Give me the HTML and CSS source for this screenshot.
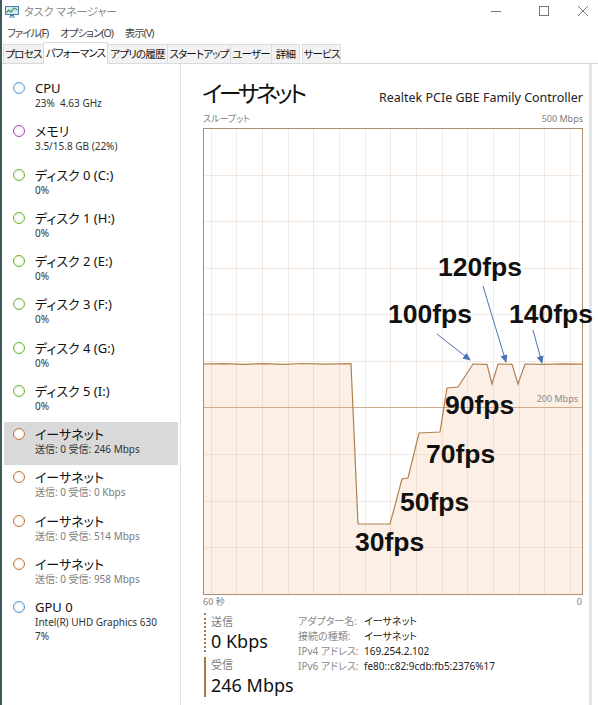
FILE: index.html
```html
<!DOCTYPE html>
<html lang="ja">
<head>
  <meta charset="UTF-8" />
  <title>タスク マネージャー</title>
  <link rel="stylesheet" href="styles.css">
</head>
<body>
  <div class="window">

    <div class="titlebar">
      <svg class="app-icon" width="14" height="13" viewBox="0 0 14 13">
        <rect x="0.5" y="1.5" width="13" height="8" fill="#d6e8f6" stroke="#4f7fae" />
        <polyline points="1.5,7.5 4,5 6,7 9,3 12.5,5" fill="none" stroke="#3a9a4a" stroke-width="1.2" />
        <path d="M5 10.5h4M4 12h6" stroke="#4f7fae" />
      </svg>
      <span class="title">タスク マネージャー</span>
      <div class="controls">
        <svg class="ctl-min" width="10" height="10" viewBox="0 0 10 10"><path d="M0 5.5H10" stroke="#777" /></svg>
        <svg class="ctl-max" width="10" height="10" viewBox="0 0 10 10"><rect x="0.5" y="0.5" width="9" height="9" fill="none" stroke="#777" /></svg>
        <svg class="ctl-close" width="10" height="10" viewBox="0 0 10 10"><path d="M0 0L10 10M10 0L0 10" stroke="#777" /></svg>
      </div>
    </div>

    <div class="menubar">
      <span>ファイル(F)</span>
      <span>オプション(O)</span>
      <span>表示(V)</span>
    </div>

    <div class="tabs">
      <div class="tab">プロセス</div>
      <div class="tab active">パフォーマンス</div>
      <div class="tab">アプリの履歴</div>
      <div class="tab">スタートアップ</div>
      <div class="tab">ユーザー</div>
      <div class="tab">詳細</div>
      <div class="tab">サービス</div>
    </div>

    <div class="main">
      <ul class="sidebar">
        <li class="item">
          <span class="dot cpu"></span>
          <div class="item-text"><div class="item-name">CPU</div><div class="item-sub">23%&nbsp; 4.63 GHz</div></div>
        </li>
        <li class="item">
          <span class="dot mem"></span>
          <div class="item-text"><div class="item-name">メモリ</div><div class="item-sub">3.5/15.8 GB (22%)</div></div>
        </li>
        <li class="item">
          <span class="dot disk"></span>
          <div class="item-text"><div class="item-name">ディスク 0 (C:)</div><div class="item-sub">0%</div></div>
        </li>
        <li class="item">
          <span class="dot disk"></span>
          <div class="item-text"><div class="item-name">ディスク 1 (H:)</div><div class="item-sub">0%</div></div>
        </li>
        <li class="item">
          <span class="dot disk"></span>
          <div class="item-text"><div class="item-name">ディスク 2 (E:)</div><div class="item-sub">0%</div></div>
        </li>
        <li class="item">
          <span class="dot disk"></span>
          <div class="item-text"><div class="item-name">ディスク 3 (F:)</div><div class="item-sub">0%</div></div>
        </li>
        <li class="item">
          <span class="dot disk"></span>
          <div class="item-text"><div class="item-name">ディスク 4 (G:)</div><div class="item-sub">0%</div></div>
        </li>
        <li class="item">
          <span class="dot disk"></span>
          <div class="item-text"><div class="item-name">ディスク 5 (I:)</div><div class="item-sub">0%</div></div>
        </li>
        <li class="item selected">
          <span class="dot net"></span>
          <div class="item-text"><div class="item-name">イーサネット</div><div class="item-sub">送信: 0 受信: 246 Mbps</div></div>
        </li>
        <li class="item">
          <span class="dot net"></span>
          <div class="item-text"><div class="item-name">イーサネット</div><div class="item-sub dim">送信: 0 受信: 0 Kbps</div></div>
        </li>
        <li class="item">
          <span class="dot net"></span>
          <div class="item-text"><div class="item-name">イーサネット</div><div class="item-sub dim">送信: 0 受信: 514 Mbps</div></div>
        </li>
        <li class="item">
          <span class="dot net"></span>
          <div class="item-text"><div class="item-name">イーサネット</div><div class="item-sub dim">送信: 0 受信: 958 Mbps</div></div>
        </li>
        <li class="item">
          <span class="dot gpu"></span>
          <div class="item-text"><div class="item-name">GPU 0</div><div class="item-sub">Intel(R) UHD Graphics 630</div><div class="item-sub">7%</div></div>
        </li>
      </ul>

      <section class="panel">
        <div class="panel-head">
          <h1>イーサネット</h1>
          <div class="adapter">Realtek PCIe GBE Family Controller</div>
        </div>

        <div class="axis-top">
          <span>スループット</span>
          <span>500 Mbps</span>
        </div>

        <svg class="chart" width="380" height="467" viewBox="0 0 380 467">
          <defs>
            <marker id="head" markerWidth="8" markerHeight="8" refX="7" refY="4" orient="auto" markerUnits="userSpaceOnUse">
              <path d="M0 0.5L8 4L0 7.5Z" fill="#4a72b8" />
            </marker>
          </defs>

          <!-- area under the throughput line -->
          <polygon class="area" points="0,236 20,235.6 40,236.3 60,235.6 80,236.3 100,235.5 120,236.2 148,235.6 155,396 187,396 199,351 205,350 216,305 237,304 244,260 255,259 270,236 284,236.3 289,256 295,236 309,236.3 315,256 322,236 340,236.4 360,235.8 379,236.2 379,466 0,466" />

          <g class="grid">
            <path d="M8.5 1V466M33.5 1V466M59.5 1V466M85.5 1V466M110.5 1V466M136.5 1V466M162.5 1V466M187.5 1V466M213.5 1V466M239.5 1V466M264.5 1V466M290.5 1V466M316.5 1V466M341.5 1V466M367.5 1V466" />
            <path d="M1 47.5H379M1 93.5H379M1 140.5H379M1 186.5H379M1 233.5H379M1 326.5H379M1 373.5H379M1 419.5H379" />
          </g>
          <path class="mark-200" d="M1 279.5H379" />
          <text class="mark-label" x="375" y="274" text-anchor="end">200 Mbps</text>

          <polyline class="line" points="0,236 20,235.6 40,236.3 60,235.6 80,236.3 100,235.5 120,236.2 148,235.6 155,396 187,396 199,351 205,350 216,305 237,304 244,260 255,259 270,236 284,236.3 289,256 295,236 309,236.3 315,256 322,236 340,236.4 360,235.8 379,236.2" />

          <rect class="frame" x="0.5" y="0.5" width="379" height="466" />

          <!-- annotations -->
          <g class="arrows">
            <line x1="234" y1="206" x2="267" y2="232" marker-end="url(#head)" />
            <line x1="280" y1="158" x2="303" y2="234" marker-end="url(#head)" />
            <line x1="330" y1="202" x2="339" y2="235" marker-end="url(#head)" />
          </g>
          <g class="fps">
            <text x="235" y="148">120fps</text>
            <text x="185" y="195">100fps</text>
            <text x="306" y="195">140fps</text>
            <text x="242" y="286">90fps</text>
            <text x="223" y="335">70fps</text>
            <text x="197" y="383">50fps</text>
            <text x="152" y="423">30fps</text>
          </g>
        </svg>

        <div class="axis-bottom">
          <span>60 秒</span>
          <span>0</span>
        </div>

        <div class="stats">
          <div class="rates">
            <div class="rate send">
              <div class="rate-label">送信</div>
              <div class="rate-value">0 Kbps</div>
            </div>
            <div class="rate recv">
              <div class="rate-label">受信</div>
              <div class="rate-value">246 Mbps</div>
            </div>
          </div>
          <dl class="details">
            <dt>アダプター名:</dt><dd>イーサネット</dd>
            <dt>接続の種類:</dt><dd>イーサネット</dd>
            <dt>IPv4 アドレス:</dt><dd>169.254.2.102</dd>
            <dt>IPv6 アドレス:</dt><dd>fe80::c82:9cdb:fb5:2376%17</dd>
          </dl>
        </div>
      </section>
    </div>

  </div>
</body>
</html>
```

FILE: styles.css
```css
body {
  margin: 0;
  background: #fff;
  font-family: "Noto Sans", "Noto Sans CJK JP", sans-serif;
  font-feature-settings: "palt";
  color: #111;
}

.window {
  width: 598px;
  height: 705px;
  box-sizing: border-box;
  border-left: 2px solid #3d5b59;
  display: flex;
  flex-direction: column;
  overflow: hidden;
}

/* title bar */
.titlebar {
  height: 22px;
  display: flex;
  align-items: center;
  padding-left: 3px;
}

.app-icon {
  display: block;
}

.title {
  margin-left: 5px;
  font-size: 11px;
  color: #8a8a8a;
}

.controls {
  margin-left: auto;
  display: flex;
  align-items: center;
}

.ctl-min { margin-right: 38px; }
.ctl-max { margin-right: 29px; }
.ctl-close { margin-right: 10px; }

/* menu */
.menubar {
  height: 20px;
  display: flex;
  align-items: center;
  gap: 12px;
  padding-left: 5px;
  font-size: 10.5px;
  letter-spacing: -1px;
  color: #444;
}

/* tabs */
.tabs {
  height: 21px;
  display: flex;
  align-items: flex-end;
  padding-left: 1px;
  border-bottom: 1px solid #dadada;
}

.tab {
  height: 18px;
  line-height: 18px;
  box-sizing: content-box;
  border: 1px solid #dcdcdc;
  border-bottom: none;
  margin-right: -1px;
  background: #f2f2f2;
  font-size: 10.5px;
  letter-spacing: -0.8px;
  text-align: center;
  white-space: nowrap;
  color: #111;
}

.tab:nth-child(1) { width: 39px; }
.tab:nth-child(2) { width: 63px; }
.tab:nth-child(3) { width: 59px; }
.tab:nth-child(4) { width: 62px; }
.tab:nth-child(5) { width: 40px; }
.tab:nth-child(6) { width: 27px; }
.tab:nth-child(7) { width: 37px; margin-left: 3px; }

.tab.active {
  height: 21px;
  line-height: 20px;
  margin-bottom: -1px;
  background: #fff;
  position: relative;
}

/* main area */
.main {
  flex: 1;
  display: flex;
  min-height: 0;
}

.sidebar {
  width: 179px;
  box-sizing: border-box;
  margin: 0;
  padding: 12px 2px 0 2px;
  list-style: none;
  border-right: 1px solid #e2e2e2;
}

.item {
  height: 43.25px;
  box-sizing: border-box;
  display: flex;
  align-items: flex-start;
  padding: 4px 0 0 9px;
}

.item.selected {
  background: #d9d9d9;
}

.dot {
  width: 12px;
  height: 12px;
  box-sizing: border-box;
  border-radius: 50%;
  border: 1px solid;
  margin-top: 2px;
  flex: none;
}

.dot.cpu { border-color: #5d9bd3; background: radial-gradient(#fff 30%, #dcebf7); }
.dot.mem { border-color: #a24eb4; background: radial-gradient(#fff 30%, #f3e2f6); }
.dot.disk { border-color: #6bb232; background: radial-gradient(#fff 30%, #e3f4d4); }
.dot.net { border-color: #b9783e; background: radial-gradient(#fff 30%, #f8e8d8); }
.dot.gpu { border-color: #5b94c8; background: radial-gradient(#fff 30%, #d4e6f5); }

.item-text {
  margin-left: 10px;
}

.item-name {
  font-size: 13px;
  line-height: 16px;
  color: #111;
}

.item-sub {
  font-size: 10px;
  line-height: 14px;
  color: #333;
}

.item-sub.dim {
  color: #7c7c7c;
}

/* detail panel */
.panel {
  flex: 1;
  padding: 0 6px 0 22px;
  border-right: 3px solid #e6e6e6;
  margin-right: 6px;
}

.panel-head {
  height: 44px;
  box-sizing: border-box;
  padding-top: 14px;
  display: flex;
  justify-content: space-between;
  align-items: baseline;
}

.panel-head h1 {
  margin: 0 0 0 -1px;
  font-size: 23px;
  line-height: 30px;
  font-weight: normal;
  letter-spacing: -3.4px;
  color: #111;
}

.adapter {
  font-size: 12.5px;
  color: #222;
}

.axis-top,
.axis-bottom {
  display: flex;
  justify-content: space-between;
  font-size: 9px;
  color: #808080;
}

.axis-top {
  height: 12px;
  line-height: 12px;
  margin: 5px 0 3px;
}

.axis-bottom {
  height: 14px;
  line-height: 14px;
  padding-right: 1px;
}

.chart {
  display: block;
  overflow: visible;
}

.chart .area {
  fill: #fcf0e6;
}

.chart .grid path {
  stroke: rgba(190, 130, 80, 0.17);
  stroke-width: 1;
  fill: none;
}

.chart .mark-200 {
  stroke: #d2ab8a;
  stroke-width: 1;
}

.chart .mark-label {
  font-family: "Noto Sans", sans-serif;
  font-size: 9px;
  fill: #8a8a8a;
}

.chart .line {
  fill: none;
  stroke: #b0804f;
  stroke-width: 1.2;
}

.chart .frame {
  fill: none;
  stroke: #b08d6c;
}

.chart .arrows line {
  stroke: #4a72b8;
  stroke-width: 1;
}

.chart .fps text {
  font-family: "Liberation Sans", Arial, sans-serif;
  font-weight: bold;
  font-size: 26.5px;
  fill: #111;
}

/* bottom stats */
.stats {
  display: flex;
  align-items: flex-start;
  margin-top: 4px;
}

.rates {
  width: 95px;
  flex: none;
}

.rate {
  margin-left: 1px;
  padding-left: 5px;
  border-left: 2px solid #a97846;
}

.rate.send {
  border-left-style: dotted;
  height: 39px;
}

.rate.recv {
  margin-top: 5px;
  height: 40px;
}

.rate-label {
  font-size: 11px;
  line-height: 17px;
  color: #7c7c7c;
}

.recv .rate-label {
  line-height: 16px;
}

.rate-value {
  font-size: 18px;
  line-height: 22px;
  color: #111;
}

.recv .rate-value {
  line-height: 24px;
}

.details {
  margin: 1px 0 0;
  display: grid;
  grid-template-columns: 66px auto;
  font-size: 10px;
  line-height: 15px;
}

.details dt {
  color: #8a8a8a;
}

.details dd {
  margin: 0;
  color: #222;
}
```
